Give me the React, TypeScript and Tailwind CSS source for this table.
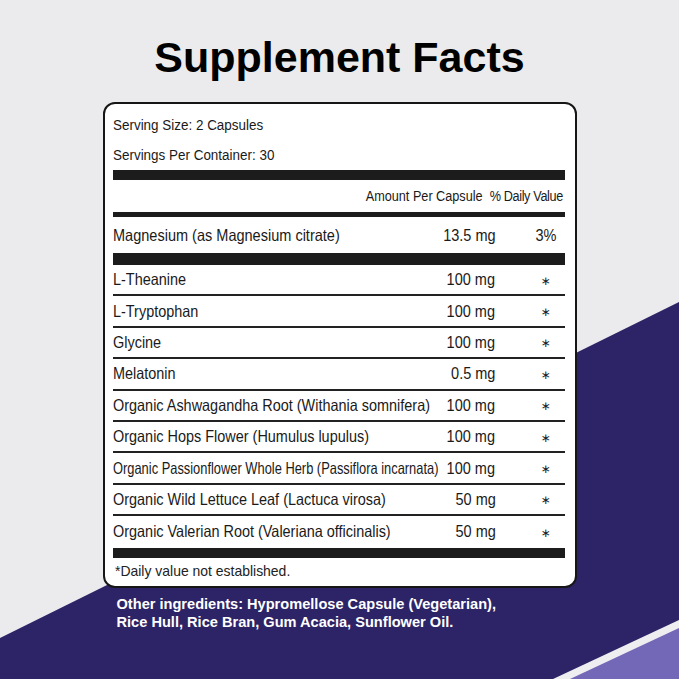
const rows = [
  { name: "L-Theanine", amount: "100 mg" },
  { name: "L-Tryptophan", amount: "100 mg" },
  { name: "Glycine", amount: "100 mg" },
  { name: "Melatonin", amount: "0.5 mg" },
  { name: "Organic Ashwagandha Root (Withania somnifera)", amount: "100 mg" },
  { name: "Organic Hops Flower (Humulus lupulus)", amount: "100 mg" },
  { name: "Organic Passionflower Whole Herb (Passiflora incarnata)", amount: "100 mg", narrow: true },
  { name: "Organic Wild Lettuce Leaf (Lactuca virosa)", amount: "50 mg" },
  { name: "Organic Valerian Root (Valeriana officinalis)", amount: "50 mg" },
];

const Backdrop = () => (
  <svg className="absolute inset-0" width="679" height="679" viewBox="0 0 679 679">
    <polygon points="0,638 679,302 679,679 0,679" fill="#2d2467" />
    <polygon points="679,620 679,679 553,679" fill="#eeeef0" />
    <polygon points="679,628 679,679 570,679" fill="#7367b8" />
  </svg>
);

const App = () => {
  return (
    <div className="relative w-[679px] h-[679px] overflow-hidden bg-[#ebebed] font-['Liberation_Sans',Arial,sans-serif] text-[#1a1a1a]">
      <Backdrop />

      <div className="relative">
        <h1 className="mt-[36px] text-center text-[43px] leading-none font-bold text-black">
          Supplement Facts
        </h1>

        {/* label card */}
        <div className="mx-auto mt-[23px] w-[474px] h-[486px] rounded-[12px] border-2 border-[#161616] bg-white pl-[8px] pr-[10px] pt-[6px]">
          <div className="h-[30px] flex items-center text-[14px]">
            <span className="inline-block origin-left whitespace-nowrap [transform:scaleX(0.96)]">Serving Size: 2 Capsules</span>
          </div>
          <div className="h-[30px] flex items-center text-[14px]">
            <span className="inline-block origin-left whitespace-nowrap [transform:scaleX(0.96)]">Servings Per Container: 30</span>
          </div>
          <div className="h-[10px] bg-[#1c1c1c]" />

          <div className="h-[32px] flex items-center justify-end pr-[2px] text-[14px]">
            <span className="inline-block origin-right whitespace-nowrap [transform:scaleX(0.905)]">
              Amount Per Capsule&nbsp;&nbsp;<span className="tracking-[-0.4px]">% Daily Value</span>
            </span>
          </div>
          <div className="h-[5px] bg-[#1c1c1c]" />

          <div className="h-[36px] flex items-center text-[16.5px]">
            <div className="flex-1 min-w-0 whitespace-nowrap">
              <span className="inline-block origin-left [transform:scaleX(0.88)]">Magnesium (as Magnesium citrate)</span>
            </div>
            <div className="w-[60px] text-right whitespace-nowrap">
              <span className="inline-block origin-right [transform:scaleX(0.88)]">13.5 mg</span>
            </div>
            <div className="ml-[31px] w-[38px] text-center">
              <span className="inline-block [transform:scaleX(0.88)]">3%</span>
            </div>
          </div>
          <div className="h-[12px] bg-[#1c1c1c]" />

          {rows.map((r, i) => (
            <div
              key={r.name}
              className={
                "h-[31.4px] flex items-center text-[16.5px] " +
                (i < rows.length - 1 ? "border-b-2 border-[#222]" : "")
              }
            >
              <div className="flex-1 min-w-0 whitespace-nowrap">
                <span
                  className={
                    r.narrow
                      ? "inline-block origin-left [transform:scaleX(0.78)]"
                      : "inline-block origin-left [transform:scaleX(0.875)]"
                  }
                >
                  {r.name}
                </span>
              </div>
              <div className="w-[60px] text-right whitespace-nowrap">
                <span className="inline-block origin-right [transform:scaleX(0.88)]">{r.amount}</span>
              </div>
              <div className="ml-[31px] w-[38px] text-center font-['DejaVu_Sans',sans-serif] text-[12px] pt-[2px]">∗</div>
            </div>
          ))}
          <div className="h-[10px] bg-[#1c1c1c]" />

          <div className="h-[28px] flex items-center pl-[2px] text-[15px] text-[#222]">
            <span className="inline-block origin-left whitespace-nowrap [transform:scaleX(0.93)]">*Daily value not established.</span>
          </div>
        </div>

        <div className="mx-auto w-[474px] pl-[14px] pt-[7px] text-[14.6px] leading-[18px] font-bold text-white">
          Other ingredients: Hypromellose Capsule (Vegetarian),
          <br />
          Rice Hull, Rice Bran, Gum Acacia, Sunflower Oil.
        </div>
      </div>
    </div>
  );
};

export default App;
